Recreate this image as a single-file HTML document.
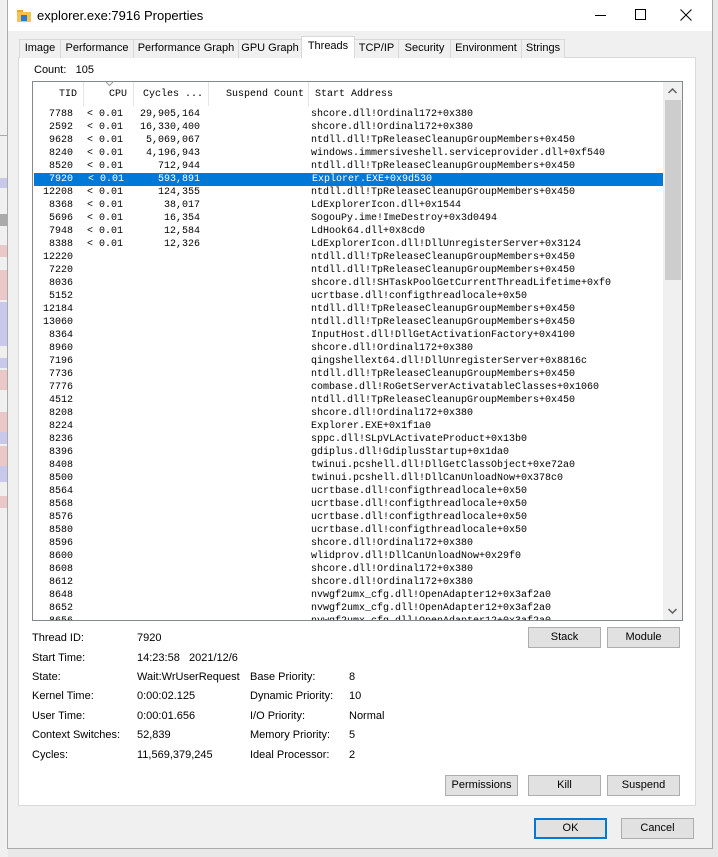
<!DOCTYPE html>
<html><head><meta charset="utf-8"><style>
*{margin:0;padding:0;box-sizing:border-box}
body{width:718px;height:857px;background:#e8e8e8;position:relative;overflow:hidden;font-family:"Liberation Sans",sans-serif;font-size:11px;color:#000}
.a{position:absolute}
#bgs{left:0;top:0;width:8px;height:857px;background:#f0f0f0}
#win{left:7px;top:0;width:706px;height:849px;background:#f0f0f0;border:1px solid #aaa;border-top:none}
#title{left:8px;top:0;width:704px;height:31px;background:#fff}
.tab{position:absolute;top:39px;height:19px;border:1px solid #d9d9d9;border-bottom:none;background:#f0f0f0;font-size:11px;line-height:17px;text-align:center;white-space:nowrap}
#page{left:18px;top:57px;width:678px;height:749px;background:#fff;border:1px solid #d9d9d9}
#list{left:32px;top:81px;width:651px;height:540px;border:1px solid #828790;background:#fff;overflow:hidden}
.hd{position:absolute;top:0;height:24px;line-height:25px;font-family:"Liberation Mono",monospace;font-size:10px;color:#000;border-right:1px solid #e5e5e5;white-space:nowrap}
#rows{position:absolute;left:0;top:26px;width:630px;font-family:"Liberation Mono",monospace;font-size:10px}
.r{height:13px;line-height:13px;position:relative;white-space:pre}
.r span{position:absolute}
.t{right:590px;text-align:right}
.c{left:54px}
.y{right:463px;text-align:right}
.s{left:278px}
.sel{background:#0078d7;color:#fff;margin-left:1px}
.btn{position:absolute;height:21px;background:#e1e1e1;border:1px solid #adadad;text-align:center;line-height:19px;font-size:11px;white-space:nowrap}
.l{position:absolute;font-size:11px;line-height:14px;white-space:nowrap}
</style></head><body>
<div class="a" id="bgs"></div>
<div class="a" style="left:0;top:135px;width:7px;height:1px;background:#aaa"></div>
<div class="a" style="left:0;top:178px;width:7px;height:10px;background:#c8c8ea"></div>
<div class="a" style="left:0;top:214px;width:7px;height:12px;background:#aaa"></div>
<div class="a" style="left:0;top:245px;width:7px;height:12px;background:#eac8c8"></div>
<div class="a" style="left:0;top:270px;width:7px;height:30px;background:#eac8c8"></div>
<div class="a" style="left:0;top:302px;width:7px;height:44px;background:#c8c8ea"></div>
<div class="a" style="left:0;top:358px;width:7px;height:10px;background:#c8c8ea"></div>
<div class="a" style="left:0;top:370px;width:7px;height:20px;background:#eac8c8"></div>
<div class="a" style="left:0;top:412px;width:7px;height:20px;background:#eac8c8"></div>
<div class="a" style="left:0;top:432px;width:7px;height:12px;background:#c8c8ea"></div>
<div class="a" style="left:0;top:446px;width:7px;height:20px;background:#eac8c8"></div>
<div class="a" style="left:0;top:466px;width:7px;height:16px;background:#c8c8ea"></div>
<div class="a" style="left:0;top:496px;width:7px;height:12px;background:#eac8c8"></div>
<div class="a" id="win"></div>
<div class="a" id="title"></div>
<svg class="a" style="left:17px;top:9px" width="14" height="13" viewBox="0 0 14 13"><rect x="0" y="1" width="6" height="3" fill="#e8a735"/><rect x="0" y="3" width="14" height="10" fill="#f7c44a"/><rect x="4" y="6" width="6" height="6" fill="#2c7ad6"/></svg>
<div class="a" style="left:37px;top:7px;font-size:13px;line-height:17px;white-space:nowrap">explorer.exe:7916 Properties</div>
<div class="a" style="left:595px;top:15px;width:11px;height:1px;background:#000"></div>
<div class="a" style="left:635px;top:9px;width:11px;height:11px;border:1px solid #000"></div>
<svg class="a" style="left:680px;top:9px" width="12" height="12"><path d="M0.5 0.5L11.5 11.5M11.5 0.5L0.5 11.5" stroke="#000" stroke-width="1"/></svg>
<div class="a" id="page"></div>
<div class="tab" style="left:19px;width:42px">Image</div>
<div class="tab" style="left:60px;width:74px">Performance</div>
<div class="tab" style="left:133px;width:106px">Performance Graph</div>
<div class="tab" style="left:238px;width:64px">GPU Graph</div>
<div class="tab" style="left:301px;top:36px;height:22px;width:54px;background:#fff;line-height:19px">Threads</div>
<div class="tab" style="left:354px;width:45px">TCP/IP</div>
<div class="tab" style="left:398px;width:53px">Security</div>
<div class="tab" style="left:450px;width:72px">Environment</div>
<div class="tab" style="left:521px;width:44px">Strings</div>
<div class="l" style="left:34px;top:63px">Count:&nbsp;&nbsp;&nbsp;105</div>
<div class="a" id="list">
<div class="hd" style="left:0;width:51px;text-align:right;padding-right:6px">TID</div>
<div class="hd" style="left:51px;width:50px;text-align:right;padding-right:6px">CPU</div>
<svg class="a" style="left:73px;top:0" width="7" height="4"><path d="M0 0L3.5 3.5L7 0" stroke="#999" fill="none"/></svg>
<div class="hd" style="left:101px;width:75px;padding-left:9px">Cycles ...</div>
<div class="hd" style="left:176px;width:100px;text-align:right;padding-right:4px">Suspend Count</div>
<div class="hd" style="left:276px;width:354px;padding-left:6px;border-right:none">Start Address</div>
<div id="rows">
<div class="r"><span class="t">7788</span><span class="c">&lt; 0.01</span><span class="y">29,905,164</span><span class="s">shcore.dll!Ordinal172+0x380</span></div>
<div class="r"><span class="t">2592</span><span class="c">&lt; 0.01</span><span class="y">16,330,400</span><span class="s">shcore.dll!Ordinal172+0x380</span></div>
<div class="r"><span class="t">9628</span><span class="c">&lt; 0.01</span><span class="y">5,069,067</span><span class="s">ntdll.dll!TpReleaseCleanupGroupMembers+0x450</span></div>
<div class="r"><span class="t">8240</span><span class="c">&lt; 0.01</span><span class="y">4,196,943</span><span class="s">windows.immersiveshell.serviceprovider.dll+0xf540</span></div>
<div class="r"><span class="t">8520</span><span class="c">&lt; 0.01</span><span class="y">712,944</span><span class="s">ntdll.dll!TpReleaseCleanupGroupMembers+0x450</span></div>
<div class="r sel"><span class="t">7920</span><span class="c">&lt; 0.01</span><span class="y">593,891</span><span class="s">Explorer.EXE+0x9d530</span></div>
<div class="r"><span class="t">12208</span><span class="c">&lt; 0.01</span><span class="y">124,355</span><span class="s">ntdll.dll!TpReleaseCleanupGroupMembers+0x450</span></div>
<div class="r"><span class="t">8368</span><span class="c">&lt; 0.01</span><span class="y">38,017</span><span class="s">LdExplorerIcon.dll+0x1544</span></div>
<div class="r"><span class="t">5696</span><span class="c">&lt; 0.01</span><span class="y">16,354</span><span class="s">SogouPy.ime!ImeDestroy+0x3d0494</span></div>
<div class="r"><span class="t">7948</span><span class="c">&lt; 0.01</span><span class="y">12,584</span><span class="s">LdHook64.dll+0x8cd0</span></div>
<div class="r"><span class="t">8388</span><span class="c">&lt; 0.01</span><span class="y">12,326</span><span class="s">LdExplorerIcon.dll!DllUnregisterServer+0x3124</span></div>
<div class="r"><span class="t">12220</span><span class="s">ntdll.dll!TpReleaseCleanupGroupMembers+0x450</span></div>
<div class="r"><span class="t">7220</span><span class="s">ntdll.dll!TpReleaseCleanupGroupMembers+0x450</span></div>
<div class="r"><span class="t">8036</span><span class="s">shcore.dll!SHTaskPoolGetCurrentThreadLifetime+0xf0</span></div>
<div class="r"><span class="t">5152</span><span class="s">ucrtbase.dll!configthreadlocale+0x50</span></div>
<div class="r"><span class="t">12184</span><span class="s">ntdll.dll!TpReleaseCleanupGroupMembers+0x450</span></div>
<div class="r"><span class="t">13060</span><span class="s">ntdll.dll!TpReleaseCleanupGroupMembers+0x450</span></div>
<div class="r"><span class="t">8364</span><span class="s">InputHost.dll!DllGetActivationFactory+0x4100</span></div>
<div class="r"><span class="t">8960</span><span class="s">shcore.dll!Ordinal172+0x380</span></div>
<div class="r"><span class="t">7196</span><span class="s">qingshellext64.dll!DllUnregisterServer+0x8816c</span></div>
<div class="r"><span class="t">7736</span><span class="s">ntdll.dll!TpReleaseCleanupGroupMembers+0x450</span></div>
<div class="r"><span class="t">7776</span><span class="s">combase.dll!RoGetServerActivatableClasses+0x1060</span></div>
<div class="r"><span class="t">4512</span><span class="s">ntdll.dll!TpReleaseCleanupGroupMembers+0x450</span></div>
<div class="r"><span class="t">8208</span><span class="s">shcore.dll!Ordinal172+0x380</span></div>
<div class="r"><span class="t">8224</span><span class="s">Explorer.EXE+0x1f1a0</span></div>
<div class="r"><span class="t">8236</span><span class="s">sppc.dll!SLpVLActivateProduct+0x13b0</span></div>
<div class="r"><span class="t">8396</span><span class="s">gdiplus.dll!GdiplusStartup+0x1da0</span></div>
<div class="r"><span class="t">8408</span><span class="s">twinui.pcshell.dll!DllGetClassObject+0xe72a0</span></div>
<div class="r"><span class="t">8500</span><span class="s">twinui.pcshell.dll!DllCanUnloadNow+0x378c0</span></div>
<div class="r"><span class="t">8564</span><span class="s">ucrtbase.dll!configthreadlocale+0x50</span></div>
<div class="r"><span class="t">8568</span><span class="s">ucrtbase.dll!configthreadlocale+0x50</span></div>
<div class="r"><span class="t">8576</span><span class="s">ucrtbase.dll!configthreadlocale+0x50</span></div>
<div class="r"><span class="t">8580</span><span class="s">ucrtbase.dll!configthreadlocale+0x50</span></div>
<div class="r"><span class="t">8596</span><span class="s">shcore.dll!Ordinal172+0x380</span></div>
<div class="r"><span class="t">8600</span><span class="s">wlidprov.dll!DllCanUnloadNow+0x29f0</span></div>
<div class="r"><span class="t">8608</span><span class="s">shcore.dll!Ordinal172+0x380</span></div>
<div class="r"><span class="t">8612</span><span class="s">shcore.dll!Ordinal172+0x380</span></div>
<div class="r"><span class="t">8648</span><span class="s">nvwgf2umx_cfg.dll!OpenAdapter12+0x3af2a0</span></div>
<div class="r"><span class="t">8652</span><span class="s">nvwgf2umx_cfg.dll!OpenAdapter12+0x3af2a0</span></div>
<div class="r"><span class="t">8656</span><span class="s">nvwgf2umx_cfg.dll!OpenAdapter12+0x3af2a0</span></div>
</div>
<div class="a" style="left:630px;top:0;width:19px;height:538px;background:#f0f0f0"></div>
<div class="a" style="left:632px;top:18px;width:16px;height:180px;background:#cdcdcd"></div>
<svg class="a" style="left:635px;top:6px" width="9" height="6"><path d="M0.5 5L4.5 1L8.5 5" stroke="#606060" stroke-width="1.5" fill="none"/></svg>
<svg class="a" style="left:635px;top:526px" width="9" height="6"><path d="M0.5 1L4.5 5L8.5 1" stroke="#606060" stroke-width="1.5" fill="none"/></svg>
</div>
<div class="l" style="left:32px;top:631px">Thread ID:</div><div class="l" style="left:137px;top:631px">7920</div>
<div class="l" style="left:32px;top:651px">Start Time:</div><div class="l" style="left:137px;top:651px">14:23:58&nbsp;&nbsp;&nbsp;2021/12/6</div>
<div class="l" style="left:32px;top:670px">State:</div><div class="l" style="left:137px;top:670px">Wait:WrUserRequest</div>
<div class="l" style="left:32px;top:689px">Kernel Time:</div><div class="l" style="left:137px;top:689px">0:00:02.125</div>
<div class="l" style="left:32px;top:709px">User Time:</div><div class="l" style="left:137px;top:709px">0:00:01.656</div>
<div class="l" style="left:32px;top:728px">Context Switches:</div><div class="l" style="left:137px;top:728px">52,839</div>
<div class="l" style="left:32px;top:748px">Cycles:</div><div class="l" style="left:137px;top:748px">11,569,379,245</div>
<div class="l" style="left:250px;top:670px">Base Priority:</div><div class="l" style="left:349px;top:670px">8</div>
<div class="l" style="left:250px;top:689px">Dynamic Priority:</div><div class="l" style="left:349px;top:689px">10</div>
<div class="l" style="left:250px;top:709px">I/O Priority:</div><div class="l" style="left:349px;top:709px">Normal</div>
<div class="l" style="left:250px;top:728px">Memory Priority:</div><div class="l" style="left:349px;top:728px">5</div>
<div class="l" style="left:250px;top:748px">Ideal Processor:</div><div class="l" style="left:349px;top:748px">2</div>
<div class="btn" style="left:528px;top:627px;width:73px">Stack</div>
<div class="btn" style="left:607px;top:627px;width:73px">Module</div>
<div class="btn" style="left:445px;top:775px;width:73px">Permissions</div>
<div class="btn" style="left:528px;top:775px;width:73px">Kill</div>
<div class="btn" style="left:607px;top:775px;width:73px">Suspend</div>
<div class="btn" style="left:534px;top:818px;width:73px;border:2px solid #0078d7;line-height:17px">OK</div>
<div class="btn" style="left:621px;top:818px;width:73px">Cancel</div>
</body></html>
